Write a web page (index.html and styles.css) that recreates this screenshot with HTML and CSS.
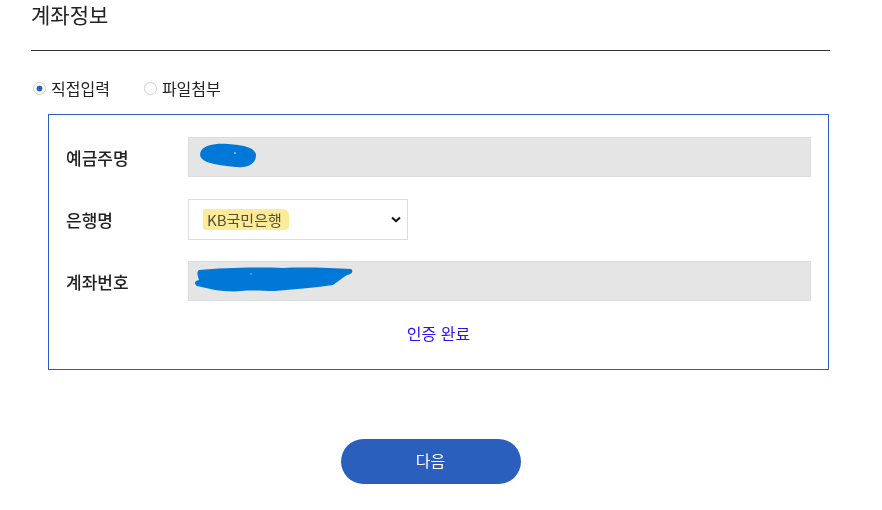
FILE: index.html
```html
<!DOCTYPE html>
<html lang="ko">
<head>
<meta charset="utf-8">
<title>계좌정보</title>
<link rel="stylesheet" href="styles.css">
</head>
<body>
<div class="page">
  <h2 class="title">계좌정보</h2>
  <div class="radios">
    <label class="radio"><input type="radio" name="mode" checked><span>직접입력</span></label>
    <label class="radio"><input type="radio" name="mode"><span>파일첨부</span></label>
  </div>
  <div class="box">
    <div class="row">
      <div class="label">예금주명</div>
      <div class="field">
        <svg class="redact redact-name" width="60" height="28" viewBox="0 0 60 28">
          <path d="M3 9 C6 3 18 1 30 2 C44 3 57 5 58 13 C58 22 50 26 38 25 C28 24 18 23 9 20 C2 17 1 13 3 9 Z" fill="#0078d7"/>
          <circle cx="37" cy="11" r="1" fill="#9ec9ee"/>
        </svg>
      </div>
    </div>
    <div class="row">
      <div class="label">은행명</div>
      <div class="select-wrap">
        <select class="select">
          <option>KB국민은행</option>
          <option>신한은행</option>
          <option>우리은행</option>
        </select>
        <span class="marker"></span>
      </div>
    </div>
    <div class="row">
      <div class="label">계좌번호</div>
      <div class="field">
        <svg class="redact redact-acct" width="162" height="30" viewBox="0 0 162 30">
          <path d="M6 5 C30 3 60 2 90 3 C110 2 140 3 158 4 C161 6 159 9 154 10 C148 14 144 17 140 20 C120 23 100 24 82 26 C70 26 60 25 48 26 C40 27 30 26 22 25 C16 24 10 22 4 21 C1 19 1 16 6 15 C5 11 3 7 6 5 Z" fill="#0078d7"/>
          <circle cx="58" cy="9" r="1" fill="#5aa6e6"/>
        </svg>
      </div>
    </div>
    <div class="done">인증 완료</div>
  </div>
  <div class="actions">
    <button class="next" type="button">다음</button>
  </div>
</div>
</body>
</html>
```

FILE: styles.css
```css
html, body {
  margin: 0;
  padding: 0;
  background: #fff;
}

body {
  font-family: "Noto Sans CJK KR", "Noto Sans", "Liberation Sans", sans-serif;
  color: #222;
}

.page {
  width: 799px;
  margin-left: 31px;
}

.title {
  margin: 0;
  padding-bottom: 21px;
  font-size: 21px;
  line-height: 29px;
  font-weight: 400;
  color: #222;
  border-bottom: 1px solid #333;
}

.radios {
  display: flex;
  align-items: center;
  gap: 34px;
  margin-top: 27px;
  padding-left: 2px;
  height: 20px;
}

.radio {
  display: flex;
  align-items: center;
  gap: 5px;
  font-size: 16px;
  line-height: 20px;
  color: #222;
  cursor: pointer;
}

.radio input {
  appearance: none;
  -webkit-appearance: none;
  margin: 0;
  width: 13px;
  height: 13px;
  border: 1px solid #cfcfcf;
  border-radius: 50%;
  background: #fff;
  box-sizing: border-box;
}

.radio input:checked {
  background: radial-gradient(circle, #2a5ec4 0 2.6px, #fff 3.3px);
}

.box {
  margin: 16px 1px 0 17px;
  border: 1px solid #2a5ec4;
  padding: 22px 17px 26px 17px;
  display: flex;
  flex-direction: column;
  gap: 22px;
}

.row {
  display: flex;
  align-items: center;
  height: 40px;
}

.label {
  width: 122px;
  flex: none;
  font-size: 17px;
  font-weight: 500;
  color: #222;
}

.field {
  position: relative;
  flex: 1;
  height: 40px;
  box-sizing: border-box;
  background: #e5e5e5;
  border: 1px solid #dcdcdc;
}

.redact {
  position: absolute;
  display: block;
}

.redact-name {
  left: 9px;
  top: 4px;
}

.redact-acct {
  left: 4px;
  top: 3px;
}

.select-wrap {
  position: relative;
  width: 220px;
  height: 41px;
}

.select {
  appearance: none;
  -webkit-appearance: none;
  width: 100%;
  height: 100%;
  box-sizing: border-box;
  border: 1px solid #dcdcdc;
  border-radius: 0;
  background: #fff url("data:image/svg+xml,%3Csvg xmlns='http://www.w3.org/2000/svg' width='10' height='7' viewBox='0 0 10 7'%3E%3Cpath d='M1 1.5 L5 5.2 L9 1.5' fill='none' stroke='%23111' stroke-width='2'/%3E%3C/svg%3E") no-repeat right 6px center;
  padding: 0 0 0 18px;
  font-family: inherit;
  font-size: 15px;
  color: #555;
  outline: none;
}

.marker {
  position: absolute;
  left: 15px;
  top: 10px;
  width: 86px;
  height: 21px;
  background: #fdeb98;
  border-radius: 2px 6px 4px 3px;
  mix-blend-mode: multiply;
  pointer-events: none;
}

.done {
  margin-top: 0;
  text-align: center;
  font-size: 16px;
  line-height: 20px;
  color: #2a10f5;
}

.actions {
  display: flex;
  justify-content: center;
  margin-top: 69px;
}

.next {
  width: 180px;
  height: 45px;
  border: 0;
  border-radius: 23px;
  background: #2a5fbd;
  color: #fff;
  font-family: inherit;
  font-size: 16px;
  line-height: 20px;
  padding: 0 0 4px;
  cursor: pointer;
}
```
